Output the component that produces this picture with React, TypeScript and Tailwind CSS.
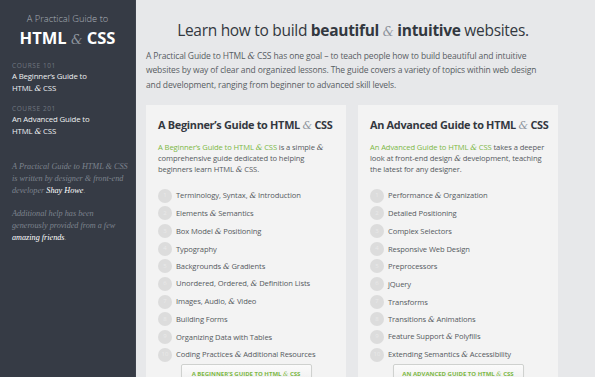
import React from 'react';

const sans = "font-['Open_Sans',sans-serif]";
const amp = "font-['DejaVu_Serif',serif] italic font-normal";

const beginner = [
  'Terminology, Syntax, & Introduction',
  'Elements & Semantics',
  'Box Model & Positioning',
  'Typography',
  'Backgrounds & Gradients',
  'Unordered, Ordered, & Definition Lists',
  'Images, Audio, & Video',
  'Building Forms',
  'Organizing Data with Tables',
  'Coding Practices & Additional Resources',
];

const advanced = [
  'Performance & Organization',
  'Detailed Positioning',
  'Complex Selectors',
  'Responsive Web Design',
  'Preprocessors',
  'jQuery',
  'Transforms',
  'Transitions & Animations',
  'Feature Support & Polyfills',
  'Extending Semantics & Accessibility',
];

// Render "&" in the serif italic used across the site
function Amp({ text, className = '' }: { text: string; className?: string }) {
  const parts = text.split('&');
  return (
    <>
      {parts.map((p, i) => (
        <React.Fragment key={i}>
          {p}
          {i < parts.length - 1 && <span className={`${amp} ${className}`}>&amp;</span>}
        </React.Fragment>
      ))}
    </>
  );
}

function Sidebar() {
  return (
    <aside className={`w-[136px] shrink-0 bg-[#363b45] border-r border-[#3e434d] ${sans} pt-[12px]`}>
      <div className="text-center">
        <div className="text-[9.3px] font-light text-[#aab0b8] leading-[14px]">A Practical Guide to</div>
        <div className="text-[16.5px] font-bold text-white leading-[22px] mt-[1px]">
          HTML <span className={`${amp} text-[#8d939c] text-[13px]`}>&amp;</span> CSS
        </div>
      </div>
      <nav className="mt-[10px] px-[12px]">
        <div className="text-[6.5px] uppercase tracking-[0.6px] text-[#707680] leading-[9px]">Course 101</div>
        <div className="text-[7.8px] tracking-[-0.15px] text-[#eef0f2] leading-[12px]">
          A Beginner’s Guide to<br />HTML <span className={amp}>&amp;</span> CSS
        </div>
        <div className="text-[6.5px] uppercase tracking-[0.6px] text-[#707680] leading-[9px] mt-[9px]">Course 201</div>
        <div className="text-[7.8px] tracking-[-0.15px] text-[#eef0f2] leading-[12px]">
          An Advanced Guide to<br />HTML <span className={amp}>&amp;</span> CSS
        </div>
      </nav>
      <div className="pl-[12px] pr-[6px] mt-[23px] font-['Liberation_Serif',serif] italic text-[8.2px] leading-[12px] text-[#7d838d]">
        <p>
          A Practical Guide to HTML &amp; CSS is written by designer &amp; front-end developer{' '}
          <span className="text-white">Shay Howe</span>.
        </p>
        <p className="mt-[11px]">
          Additional help has been generously provided from a few{' '}
          <span className="text-white">amazing friends</span>.
        </p>
      </div>
    </aside>
  );
}

function Card({
  title,
  link,
  rest,
  items,
  button,
}: {
  title: string;
  link: string;
  rest: string;
  items: string[];
  button: string;
}) {
  return (
    <div className="w-[200px] bg-[#f3f3f3] px-[12px] pt-[12px] pb-[12px]">
      <h2 className="text-[10.9px] font-bold text-[#33383f] leading-[16px] tracking-[-0.3px] whitespace-nowrap">
        <Amp text={title} className="text-[#8d939c]" />
      </h2>
      <p className="mt-[8px] text-[7.6px] tracking-[-0.1px] leading-[11.3px] text-[#555a60]">
        <span className="text-[#7cb845]">
          <Amp text={link} />
        </span>{' '}
        <Amp text={rest} />
      </p>
      <ol className="mt-[13px] flex flex-col gap-[3.65px]">
        {items.map((it, i) => (
          <li key={it} className="flex items-center gap-[4px] h-[14px]">
            <span className="w-[14px] h-[14px] rounded-full bg-[#dcdcdc] flex items-center justify-center text-[6px] text-[#e9e9e9] shrink-0">
              {i + 1}
            </span>
            <span className="text-[7.6px] tracking-[-0.1px] text-[#555a60] leading-[14px] whitespace-nowrap">
              <Amp text={it} />
            </span>
          </li>
        ))}
      </ol>
      <div className="mt-[2px] flex justify-center">
        <div className="w-[131px] border border-[#cfd1cf] rounded-[2px] bg-gradient-to-b from-[#fbfbfb] to-[#eeeeee] text-center py-[4px] text-[6px] font-bold uppercase text-[#7cb845] leading-[10px] shadow-[0_1px_1px_rgba(0,0,0,0.08)] whitespace-nowrap">
          <Amp text={button} />
        </div>
      </div>
    </div>
  );
}

export default function App() {
  return (
    <div className={`flex w-[595px] h-[377px] overflow-hidden bg-[#e7e8ea] ${sans}`}>
      <Sidebar />
      <main className="pl-[10px] pt-[18px] w-[424px]">
        <h1 className="text-center text-[15.5px] leading-[24px] text-[#33383f] tracking-[-0.3px]">
          Learn how to build <b className="font-bold">beautiful</b>{' '}
          <span className={`${amp} text-[#8d939c] text-[12.5px]`}>&amp;</span>{' '}
          <b className="font-bold">intuitive</b> websites.
        </h1>
        <p className="mt-[5px] pr-[12px] text-[8.5px] tracking-[-0.12px] leading-[14.3px] text-[#585d63]">
          A Practical Guide to HTML <span className={amp}>&amp;</span> CSS has one goal – to teach people how to
          build beautiful and intuitive websites by way of clear and organized lessons. The guide covers a variety
          of topics within web design and development, ranging from beginner to advanced skill levels.
        </p>
        <div className="mt-[13px] flex gap-[12px]">
          <Card
            title="A Beginner’s Guide to HTML & CSS"
            link="A Beginner’s Guide to HTML & CSS"
            rest="is a simple & comprehensive guide dedicated to helping beginners learn HTML & CSS."
            items={beginner}
            button="A Beginner’s Guide to HTML & CSS"
          />
          <Card
            title="An Advanced Guide to HTML & CSS"
            link="An Advanced Guide to HTML & CSS"
            rest="takes a deeper look at front-end design & development, teaching the latest for any designer."
            items={advanced}
            button="An Advanced Guide to HTML & CSS"
          />
        </div>
      </main>
    </div>
  );
}
